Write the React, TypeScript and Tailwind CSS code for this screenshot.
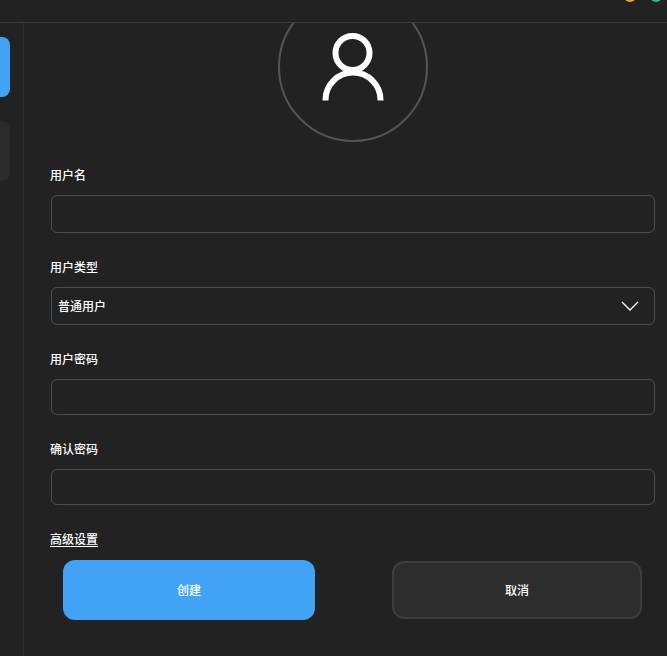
import React from 'react';

const font = { fontFamily: '"Noto Sans CJK SC", "Liberation Sans", sans-serif' };

const Field: React.FC<{ label: string; top: string; h: string }> = ({ label, top, h }) => (
  <div className={top}>
    <div className="text-xs font-medium leading-4 text-white">{label}</div>
    <div className={`${h} mt-3 ml-px rounded-md border border-[#4d4d4d]`}></div>
  </div>
);

const App: React.FC = () => {
  return (
    <div className="flex h-[656px] w-[667px] flex-col overflow-hidden bg-[#222222]" style={font}>
      {/* Title bar */}
      <div className="flex h-[23px] shrink-0 items-start justify-end gap-[14px] overflow-hidden border-b border-[#3c3c3c] pr-[5px]">
        <div className="-mt-[10px] h-3 w-3 rounded-full bg-[#f5a623]"></div>
        <div className="-mt-[10px] h-3 w-3 rounded-full bg-[#1fc47d]"></div>
      </div>

      <div className="flex min-h-0 flex-1">
        {/* Sidebar */}
        <div className="w-6 shrink-0 overflow-hidden border-r border-[#313131] pt-[14px]">
          <div className="-ml-[50px] h-[60px] w-[60px] rounded-lg bg-[#42a2f4]"></div>
          <div className="-ml-[50px] mt-6 h-[60px] w-[60px] rounded-lg bg-[#2b2b2b]"></div>
        </div>

        {/* Form */}
        <div className="min-w-0 flex-1 overflow-hidden pl-[26px] pr-3">
          <div className="-mt-[31px] ml-[228px] flex h-[150px] w-[150px] items-center justify-center rounded-full border-2 border-[#555555]">
            <svg width="62" height="68" viewBox="0 0 62 68" fill="none" stroke="#ffffff" strokeWidth="6">
              <circle cx="30.5" cy="20" r="17" />
              <path d="M3.5 67.5 V67 a27.5 27.5 0 0 1 55 0 V67.5" />
            </svg>
          </div>

          <Field label="用户名" top="mt-[25px]" h="h-[38px]" />

          <div className="mt-[26px]">
            <div className="text-xs font-medium leading-4 text-white">用户类型</div>
            <div className="mt-3 ml-px flex h-[38px] items-center justify-between rounded-md border border-[#4d4d4d] pl-[6px] pr-[15px]">
              <span className="text-xs font-medium text-white">普通用户</span>
              <svg width="18" height="10" viewBox="0 0 18 10" fill="none" stroke="#ffffff" strokeWidth="1.3">
                <path d="M1 1 L9 9 L17 1" />
              </svg>
            </div>
          </div>

          <Field label="用户密码" top="mt-[26px]" h="h-9" />
          <Field label="确认密码" top="mt-[26px]" h="h-9" />

          <div className="mt-[26px] text-xs font-medium leading-4 text-white underline underline-offset-2">高级设置</div>

          <div className="mt-[13px] flex items-center justify-between pl-[13px] pr-[13px]">
            <button className="h-[60px] w-[252px] rounded-xl bg-[#42a2f4] text-xs font-medium text-white">创建</button>
            <button className="h-[58px] w-[250px] rounded-xl border-2 border-[#3d3d3d] bg-[#2d2d2d] text-xs font-medium text-white">取消</button>
          </div>
        </div>
      </div>
    </div>
  );
};

export default App;
